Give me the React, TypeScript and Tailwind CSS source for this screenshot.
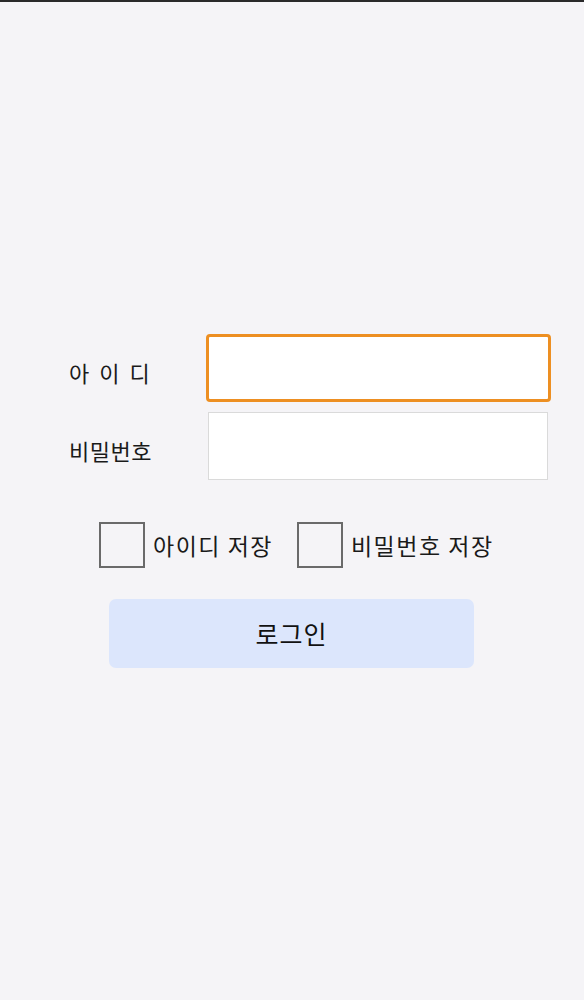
import React from "react";

export default function App() {
  return (
    <div
      className="min-h-[1000px] w-full bg-[#f5f4f7] text-[#1a1a1a]"
      style={{ fontFamily: '"Noto Sans CJK KR", "Noto Sans", sans-serif' }}
    >
      <div className="h-[2px] w-full bg-[#2a2a2a]" />
      <div className="pt-[332px]">
        <div className="flex items-center pl-[69px]">
          <div className="flex w-[137px] gap-[10px] pt-[8px] text-[22px] leading-none">
            <span>아</span>
            <span>이</span>
            <span>디</span>
          </div>
          <div className="h-[68px] w-[345px] rounded-[4px] border-[3px] border-[#ed8f22] bg-white" />
        </div>
        <div className="mt-[10px] flex items-center pl-[69px]">
          <div className="w-[139px] pt-[8px] text-[22px] leading-none tracking-[0.5px]">비밀번호</div>
          <div className="h-[68px] w-[340px] border border-[#dadada] bg-white" />
        </div>
        <div className="mt-[42px] flex items-center pl-[99px]">
          <div className="h-[46px] w-[46px] border-2 border-[#6a6a6a] bg-[#f5f4f7]" />
          <span className="ml-[8px] text-[23px] leading-none tracking-[1.5px]">아이디 저장</span>
          <div className="ml-[24px] h-[46px] w-[46px] border-2 border-[#6a6a6a] bg-[#f5f4f7]" />
          <span className="ml-[8px] text-[23px] leading-none tracking-[1.5px]">비밀번호 저장</span>
        </div>
        <div className="mt-[31px] pl-[109px]">
          <button className="flex h-[69px] w-[365px] items-center justify-center rounded-[7px] bg-[#dce6fc] text-[25px] leading-none tracking-[1px] text-[#111]">
            로그인
          </button>
        </div>
      </div>
    </div>
  );
}
